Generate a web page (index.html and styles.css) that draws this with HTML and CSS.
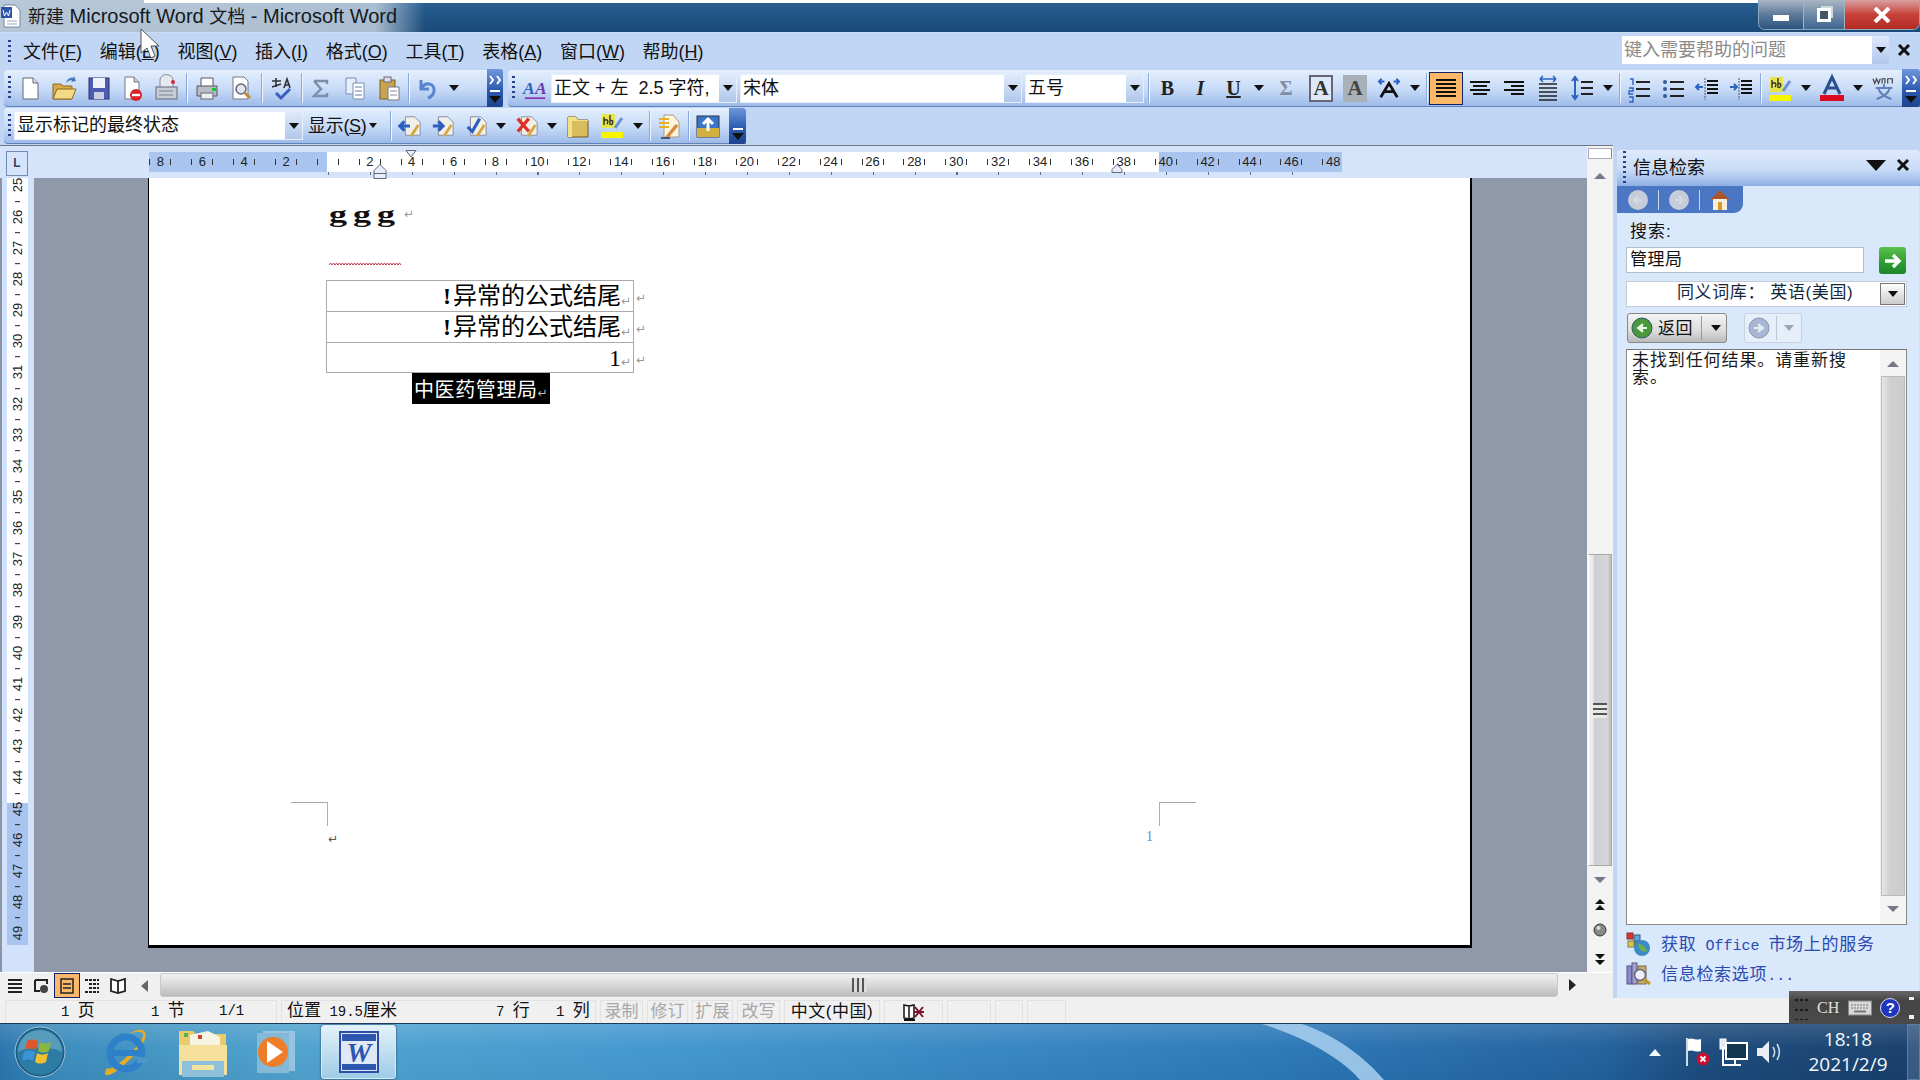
FILE: index.html
```html
<!DOCTYPE html>
<html lang="zh-CN">
<head>
<meta charset="utf-8">
<title>新建 Microsoft Word 文档 - Microsoft Word</title>
<link rel="stylesheet" href="styles.css">
</head>
<body>
<header class="title">
  <svg class="title-ic" viewBox="0 0 20 24"><path d="M3 1h11l5 5v17H3z" fill="#fff" stroke="#7a8aa0"/><rect x="0" y="3" width="11" height="11" fill="#2b56a8"/><path d="M2 6l1.5 6 2-4 2 4L9 6" fill="none" stroke="#fff"/><path d="M6 17h10M6 20h10" stroke="#9ab"/></svg>
  <span class="title-text"><span class="cj">新建</span> Microsoft Word <span class="cj">文档</span> - Microsoft Word</span>
  <div class="winbtns">
    <span class="wb wb-min"><i></i></span>
    <span class="wb wb-max"><i></i></span>
    <span class="wb wb-close"><svg width="18" height="16" viewBox="0 0 18 16"><path d="M2 1l14 14M16 1L2 15" stroke="#fff" stroke-width="4"/></svg></span>
  </div>
</header>

<nav class="menubar">
  <span class="grip"></span>
  <div class="menus">
    <span>文件(<u>F</u>)</span><span>编辑(<u>E</u>)</span><span>视图(<u>V</u>)</span><span>插入(<u>I</u>)</span><span>格式(<u>O</u>)</span><span>工具(<u>T</u>)</span><span>表格(<u>A</u>)</span><span>窗口(<u>W</u>)</span><span>帮助(<u>H</u>)</span>
  </div>
  <div class="helpbox"><span class="help-field">键入需要帮助的问题</span><span class="arrowbtn"><i class="tri"></i></span></div>
  <svg class="help-x" width="14" height="14" viewBox="0 0 14 14"><path d="M2 2l10 10M12 2L2 12" stroke="#111" stroke-width="3"/></svg>
</nav>

<section class="tbrow">
  <div class="tbgroup g1">
    <span class="grip"></span>
    <span class="btn"><svg class="ic" viewBox="0 0 24 28"><path d="M5 4h10l5 5v16H5z" fill="#fff" stroke="#667"/><path d="M15 4v5h5" fill="#dde" stroke="#667"/></svg></span>
    <span class="btn"><svg class="ic" viewBox="0 0 24 28"><path d="M1 10h8l2 2h9v13H1z" fill="#d9a94a" stroke="#8a6a20"/><path d="M1 25l4-10h19l-4 10z" fill="#f6d985" stroke="#8a6a20"/><path d="M14 9c1-4 4-6 7-5l1-2 2 5-5 1 1-2c-2 0-4 1-6 3z" fill="#4a78c0"/></svg></span>
    <span class="btn"><svg class="ic" viewBox="0 0 24 28"><rect x="3" y="4" width="20" height="21" fill="#4f5cb4" stroke="#2a3070"/><rect x="7" y="4" width="12" height="10" fill="#eef2fa"/><rect x="8" y="18" width="10" height="7" fill="#c8cede"/></svg></span>
    <span class="btn"><svg class="ic" viewBox="0 0 24 28"><path d="M5 3h9l5 5v17H5z" fill="#fff" stroke="#778"/><path d="M14 3v5h5" fill="#ccd" stroke="#778"/><circle cx="16" cy="21" r="6" fill="#d8232a"/><path d="M12 21h8" stroke="#fff" stroke-width="2.4"/></svg></span>
    <span class="btn"><svg class="ic" viewBox="0 0 24 28"><path d="M6 13V6a6 5 0 0 1 13 0v7" fill="#e6e9f0" stroke="#889"/><rect x="2" y="13" width="21" height="12" fill="#c8ccd6" stroke="#667"/><path d="M5 17h14M5 21h14" stroke="#7a8090"/><circle cx="19" cy="8" r="2" fill="#d23"/></svg></span>
    <span class="sep wide"></span>
    <span class="btn"><svg class="ic" viewBox="0 0 24 28"><path d="M6 12V4h12v8" fill="#fff" stroke="#556"/><path d="M2 12h20v10H2z" fill="#b8bcc8" stroke="#556"/><rect x="6" y="19" width="12" height="6" fill="#eee" stroke="#667"/><rect x="17" y="14" width="4" height="3" fill="#1c2"/></svg></span>
    <span class="btn"><svg class="ic" viewBox="0 0 24 28"><path d="M4 3h11l4 4v18H4z" fill="#fff" stroke="#778"/><circle cx="12" cy="15" r="5" fill="#dfe6f0" stroke="#667" stroke-width="1.5"/><path d="M16 19l5 5" stroke="#c98a2b" stroke-width="3"/></svg></span>
    <span class="sep wide"></span>
    <span class="btn"><svg class="ic" viewBox="0 0 24 28"><path d="M2 7h9M6 4v9M2 13l9-3M14 14l3-9 3 9M15 11h5" fill="none" stroke="#333" stroke-width="1.6"/><path d="M6 19l5 5L20 15" fill="none" stroke="#3a5fc0" stroke-width="3"/></svg></span>
    <span class="sep"></span>
    <span class="btn"><svg class="ic" viewBox="0 0 24 28"><path d="M5 7h13v3M18 22H5l7-7-7-8M5 22h13v-3" fill="none" stroke="#7c8da8" stroke-width="2.4"/></svg></span>
    <span class="btn"><svg class="ic" viewBox="0 0 24 28"><path d="M3 4h10v16H3z" fill="#e8eefa" stroke="#7c8db0"/><path d="M10 9h11v16H10z" fill="#fff" stroke="#7c8db0"/><path d="M12 13h7M12 17h7M12 21h7" stroke="#5f7fb5"/></svg></span>
    <span class="btn"><svg class="ic" viewBox="0 0 24 28"><rect x="3" y="6" width="15" height="19" fill="#c8a450" stroke="#7a6020"/><rect x="7" y="3" width="7" height="5" fill="#dde" stroke="#667"/><path d="M11 13h11v13H11z" fill="#fff" stroke="#778"/><path d="M13 17h7M13 21h7" stroke="#889"/></svg></span>
    <span class="sep"></span>
    <span class="btn"><svg class="ic" viewBox="0 0 24 28"><path d="M5 6v9h8" fill="none" stroke="#5a84d0" stroke-width="3"/><path d="M5 15c4-8 14-6 13 2-.4 3-3 6-6 7" fill="none" stroke="#5a84d0" stroke-width="3"/></svg></span>
    <span class="drop"><i class="tri"></i></span>
    <span class="overflow ov-end"><svg width="16" height="38" viewBox="0 0 16 38"><path d="M3 7l3 4-3 4M10 7l3 4-3 4" fill="none" stroke="#fff" stroke-width="2"/><path d="M3 22h10" stroke="#fff" stroke-width="2"/><path d="M2 27h12l-6 7z" fill="#111"/></svg></span>
  </div>
  <div class="tbgroup g2">
    <span class="grip"></span>
    <span class="btn aa"><svg class="ic" viewBox="0 0 26 28"><text x="0" y="21" class="aa1">A</text><text x="13" y="21" class="aa2">A</text><path d="M2 25h22" stroke="#8a3fb0" stroke-width="2"/></svg></span>
    <div class="combo c-style"><span class="field">正文 + 左&nbsp; 2.5 字符,</span><span class="arrowbtn"><i class="tri"></i></span></div>
    <div class="combo c-font"><span class="field">宋体</span><span class="arrowbtn"><i class="tri"></i></span></div>
    <div class="combo c-size"><span class="field">五号</span><span class="arrowbtn"><i class="tri"></i></span></div>
    <span class="sep"></span>
    <span class="btn n fmt b">B</span>
    <span class="btn n fmt it">I</span>
    <span class="btn n fmt un">U</span>
    <span class="drop"><i class="tri"></i></span>
    <span class="btn fmt sig">Σ</span>
    <span class="btn"><span class="boxa">A</span></span>
    <span class="btn"><span class="graya">A</span></span>
    <span class="btn"><svg class="ic" viewBox="0 0 26 28"><path d="M4 24L13 9l9 15M8 18h10" fill="none" stroke="#111" stroke-width="3"/><path d="M2 7h6M5 4l-3 3 3 3M24 7h-6M21 4l3 3-3 3" fill="none" stroke="#2c62c0" stroke-width="2"/></svg></span>
    <span class="drop"><i class="tri"></i></span>
    <span class="sep"></span>
    <span class="btn on"><svg class="ic" viewBox="0 0 24 28"><path d="M2 6h20M2 10h20M2 14h20M2 18h20M2 22h20" stroke="#111" stroke-width="2"/></svg></span>
    <span class="btn"><svg class="ic" viewBox="0 0 24 28"><path d="M2 8h20M5 12h14M2 16h20M5 20h14" stroke="#111" stroke-width="2"/></svg></span>
    <span class="btn"><svg class="ic" viewBox="0 0 24 28"><path d="M2 8h20M9 12h13M2 16h20M9 20h13" stroke="#111" stroke-width="2"/></svg></span>
    <span class="btn"><svg class="ic" viewBox="0 0 24 28"><path d="M3 10h18M3 14h18M3 18h18M3 22h18M3 26h18" stroke="#222" stroke-width="1.6"/><path d="M4 5h16M4 5l3-3M4 5l3 3M20 5l-3-3M20 5l-3 3" fill="none" stroke="#2c62c0" stroke-width="1.6"/></svg></span>
    <span class="btn"><svg class="ic" viewBox="0 0 24 28"><path d="M11 8h12M11 14h12M11 20h12" stroke="#222" stroke-width="2"/><path d="M5 3v22M2 7l3-4 3 4M2 21l3 4 3-4" fill="none" stroke="#2c62c0" stroke-width="2"/></svg></span>
    <span class="drop"><i class="tri"></i></span>
    <span class="sep"></span>
    <span class="btn"><svg class="ic" viewBox="0 0 24 28"><path d="M9 8h14M9 15h14M9 22h14" stroke="#222" stroke-width="2"/><path d="M3 5h3v6M2 14h4v3H2v3h4M2 23h4v5H2" fill="none" stroke="#2c62c0" stroke-width="1.4"/></svg></span>
    <span class="btn"><svg class="ic" viewBox="0 0 24 28"><path d="M9 8h14M9 15h14M9 22h14" stroke="#222" stroke-width="2"/><circle cx="4" cy="8" r="2" fill="#345a9c"/><circle cx="4" cy="15" r="2" fill="#345a9c"/><circle cx="4" cy="22" r="2" fill="#345a9c"/></svg></span>
    <span class="btn"><svg class="ic" viewBox="0 0 24 28"><path d="M12 7h11M12 11h11M12 15h11M12 19h11" stroke="#111" stroke-width="2"/><path d="M10 4v22" stroke="#555" stroke-dasharray="2 1"/><path d="M8 13H1M4 10l-3 3 3 3" fill="none" stroke="#2c62c0" stroke-width="2"/></svg></span>
    <span class="btn"><svg class="ic" viewBox="0 0 24 28"><path d="M12 7h11M12 11h11M12 15h11M12 19h11" stroke="#111" stroke-width="2"/><path d="M10 4v22" stroke="#555" stroke-dasharray="2 1"/><path d="M1 13h7M5 10l3 3-3 3" fill="none" stroke="#2c62c0" stroke-width="2"/></svg></span>
    <span class="sep"></span>
    <span class="btn"><svg class="ic" viewBox="0 0 24 28"><rect x="2" y="3" width="13" height="15" fill="#e4e44c"/><path d="M4 14V6M4 10c3-3 5 0 3 3M10 4v10M10 10c3-2 4 2 1 4" fill="none" stroke="#333" stroke-width="1.4"/><path d="M15 17L22 7" stroke="#6b90d8" stroke-width="3"/><rect x="1" y="21" width="22" height="6" fill="#f5f500"/></svg></span>
    <span class="drop"><i class="tri"></i></span>
    <span class="btn"><svg class="ic" viewBox="0 0 24 28"><path d="M4 20L12 3l8 17M7 14h10" fill="none" stroke="#2c4f8c" stroke-width="3"/><rect x="0" y="21" width="24" height="6" fill="#dc0a20"/></svg></span>
    <span class="drop"><i class="tri"></i></span>
    <span class="btn"><svg class="ic" viewBox="0 0 26 28"><path d="M1 4l2 5 2-5 2 5 2-5M11 9V4h3v5M17 9V4h5v5" fill="none" stroke="#444" stroke-width="1.3"/><path d="M13 10v3M4 14h18M7 15c2 6 8 9 14 11M19 15c-2 6-8 9-14 11" fill="none" stroke="#5f80b8" stroke-width="2.2"/></svg></span>
    <span class="overflow"><svg width="16" height="38" viewBox="0 0 16 38"><path d="M3 7l3 4-3 4M10 7l3 4-3 4" fill="none" stroke="#fff" stroke-width="2"/><path d="M3 22h10" stroke="#fff" stroke-width="2"/><path d="M2 27h12l-6 7z" fill="#111"/></svg></span>
  </div>
</section>

<section class="tbrow row2">
  <div class="tbgroup g3">
    <span class="grip"></span>
    <div class="combo c-markup"><span class="field">显示标记的最终状态</span><span class="arrowbtn"><i class="tri"></i></span></div>
    <span class="showbtn">显示(<u>S</u>)<i class="tri"></i></span>
    <span class="sep"></span>
    <span class="btn n"><svg class="ic" viewBox="0 0 26 28"><path d="M8 4h10l6 6v14H8z" fill="#f0f0e8" stroke="#889"/><path d="M13 14H2M7 9l-5 5 5 5" fill="none" stroke="#2c5fc0" stroke-width="3.4"/><path d="M14 25l8-12" stroke="#d6a640" stroke-width="3"/></svg></span>
    <span class="btn n"><svg class="ic" viewBox="0 0 26 28"><path d="M8 4h10l6 6v14H8z" fill="#f0f0e8" stroke="#889"/><path d="M2 14h11M8 9l5 5-5 5" fill="none" stroke="#2c5fc0" stroke-width="3.4"/><path d="M14 25l8-12" stroke="#d6a640" stroke-width="3"/></svg></span>
    <span class="btn n"><svg class="ic" viewBox="0 0 26 28"><path d="M7 4h11l6 6v14H7z" fill="#f0f0e8" stroke="#889"/><path d="M4 15l5 5L17 6" fill="none" stroke="#2c5fc0" stroke-width="3.4"/><path d="M14 25l8-12" stroke="#d6a640" stroke-width="3"/></svg></span>
    <span class="drop"><i class="tri"></i></span>
    <span class="btn n"><svg class="ic" viewBox="0 0 26 28"><path d="M7 4h11l6 6v14H7z" fill="#f0f0e8" stroke="#889"/><path d="M3 6l12 14M15 6L3 20" stroke="#e03028" stroke-width="3.6"/><path d="M14 25l8-12" stroke="#d6a640" stroke-width="3"/></svg></span>
    <span class="drop"><i class="tri"></i></span>
    <span class="btn"><svg class="ic" viewBox="0 0 24 28"><path d="M2 5h8l2 3h10v17H2z" fill="#d9bd5c" stroke="#6f5c20"/><path d="M2 5v20h4V9h16V8H12l-2-3z" fill="#f2e08c"/></svg></span>
    <span class="btn"><svg class="ic" viewBox="0 0 24 28"><rect x="2" y="2" width="13" height="14" fill="#e4e44c"/><path d="M4 13V5M4 9c3-3 5 0 3 3M10 3v10M10 9c3-2 4 2 1 4" fill="none" stroke="#333" stroke-width="1.4"/><path d="M15 16L22 6" stroke="#6b90d8" stroke-width="3"/><rect x="1" y="20" width="22" height="6" fill="#f5f500"/></svg></span>
    <span class="drop"><i class="tri"></i></span>
    <span class="sep"></span>
    <span class="btn"><svg class="ic" viewBox="0 0 24 28"><path d="M7 3h9l6 7v15H7z" fill="#fbf5e0" stroke="#a98"/><path d="M2 7h10M2 11h10M2 15h10" stroke="#e8b020" stroke-width="2"/><path d="M10 25l10-12" stroke="#d88a3a" stroke-width="3.4"/><path d="M4 26h9" stroke="#345" stroke-width="1.6"/></svg></span>
    <span class="sep"></span>
    <span class="btn"><svg class="ic" viewBox="0 0 24 28"><rect x="1" y="4" width="22" height="21" fill="#3a76c8" stroke="#334"/><rect x="1" y="16" width="22" height="9" fill="#d2b040"/><path d="M12 7v12M7 12l5-5 5 5" fill="none" stroke="#fff" stroke-width="3"/></svg></span>
    <span class="overflow ov-end ov2"><svg width="16" height="36" viewBox="0 0 16 36"><path d="M3 21h10" stroke="#fff" stroke-width="2"/><path d="M2 25h12l-6 7z" fill="#111"/></svg></span>
  </div>
</section>

<main class="work">
  <div class="left">
    <div class="left-top">
      <div class="editor">
        <div class="hruler">
          <span class="tabbox">L</span>
          <div class="hr-strip">
            <div class="hr-cells">
              <span>8</span><span>6</span><span>4</span><span>2</span><span></span><span>2</span><span>4</span><span>6</span><span>8</span><span>10</span><span>12</span><span>14</span><span>16</span><span>18</span><span>20</span><span>22</span><span>24</span><span>26</span><span>28</span><span>30</span><span>32</span><span>34</span><span>36</span><span>38</span><span>40</span><span>42</span><span>44</span><span>46</span><span>48</span>
            </div>
            <div class="hr-bottom"></div>
          </div>
          <svg class="marker m-first" width="12" height="8" viewBox="0 0 12 8"><path d="M1 .5h10L6 7z" fill="#e8eefa" stroke="#667"/></svg>
          <svg class="marker m-left" width="14" height="15" viewBox="0 0 14 15"><path d="M7 .5l6 6v3H1v-3z M1 9.5h12v5H1z" fill="#e8eefa" stroke="#667"/></svg>
          <svg class="marker m-right" width="12" height="9" viewBox="0 0 12 9"><path d="M6 .5l5 5v3H1v-3z" fill="#e8eefa" stroke="#667"/></svg>
        </div>
        <div class="docarea">
          <div class="vruler"><div class="vr-strip"><div class="vr-cells">
            <span>25</span><span>26</span><span>27</span><span>28</span><span>29</span><span>30</span><span>31</span><span>32</span><span>33</span><span>34</span><span>35</span><span>36</span><span>37</span><span>38</span><span>39</span><span>40</span><span>41</span><span>42</span><span>43</span><span>44</span><span>45</span><span>46</span><span>47</span><span>48</span><span>49</span>
          </div></div></div>
          <div class="canvas">
            <article class="page">
              <div class="content">
                <p class="ggg"><span class="gs">ggg</span><i class="pm">↵</i></p>
                <svg class="squiggle" width="74" height="4" viewBox="0 0 74 4"><path d="M0 3l1.500-2 1.500 2 1.500-2 1.500 2 1.500-2 1.500 2 1.500-2 1.500 2 1.500-2 1.500 2 1.500-2 1.500 2 1.500-2 1.500 2 1.500-2 1.500 2 1.500-2 1.500 2 1.500-2 1.500 2 1.500-2 1.500 2 1.500-2 1.500 2 1.500-2 1.500 2 1.500-2 1.500 2 1.500-2 1.500 2 1.500-2 1.500 2 1.500-2 1.500 2 1.500-2 1.500 2 1.500-2 1.500 2 1.500-2 1.500 2 1.500-2 1.500 2 1.500-2 1.500 2 1.500-2 1.500 2 1.500-2 1.500 2" fill="none" stroke="#c8324a"/></svg>
                <div class="table">
                  <div class="tr"><div class="td"><b class="bang">!</b>异常的公式结尾<i class="pm">↵</i></div><i class="pm rowend">↵</i></div>
                  <div class="tr"><div class="td"><b class="bang">!</b>异常的公式结尾<i class="pm">↵</i></div><i class="pm rowend">↵</i></div>
                  <div class="tr last"><div class="td"><span class="one">1</span><i class="pm">↵</i></div><i class="pm rowend">↵</i></div>
                </div>
                <div class="selected">中医药管理局<i class="pm">↵</i></div>
              </div>
              <footer class="pagefoot">
                <div class="corner-l"><span class="crop"></span><i class="pm">↵</i></div>
                <div class="corner-r"><span class="pnum">1</span><span class="crop"></span></div>
              </footer>
            </article>
          </div>
        </div>
      </div>
      <aside class="vscroll">
        <span class="split"></span>
        <span class="sb-arrow up"></span>
        <span class="vtrack"></span>
        <span class="vthumb"><i class="grip-h"></i></span>
        <span class="sb-arrow down"></span>
        <svg class="pgnav" width="14" height="14" viewBox="0 0 14 14"><path d="M7 1l5 5H2zM2 12l5-5 5 5z" fill="#111"/></svg>
        <svg class="pgnav ball" width="14" height="14" viewBox="0 0 14 14"><circle cx="7" cy="7" r="6" fill="#888" stroke="#333"/><circle cx="5.500" cy="5" r="2" fill="#ddd"/></svg>
        <svg class="pgnav" width="14" height="14" viewBox="0 0 14 14"><path d="M2 2l5 5 5-5zM2 8h10l-5 5z" fill="#111"/></svg>
      </aside>
    </div>
    <div class="hscroll">
      <div class="views">
        <svg class="vw" width="18" height="18" viewBox="0 0 18 18"><path d="M2 3h14M2 7h14M2 11h14M2 15h14" stroke="#222" stroke-width="2"/></svg>
        <svg class="vw" width="18" height="18" viewBox="0 0 18 18"><path d="M3 3h12v4M3 3v11h5" fill="none" stroke="#222" stroke-width="2"/><circle cx="12" cy="12" r="4" fill="#444"/></svg>
        <span class="vw-on"><svg width="16" height="16" viewBox="0 0 16 16"><rect x="2" y="1" width="12" height="14" fill="none" stroke="#222" stroke-width="1.500"/><path d="M4 6h8M4 10h8" stroke="#222" stroke-width="1.500"/></svg></span>
        <svg class="vw" width="18" height="18" viewBox="0 0 18 18"><path d="M2 3h14M6 7h10M6 11h10M2 15h14" stroke="#222" stroke-width="2" stroke-dasharray="3 1"/></svg>
        <svg class="vw" width="18" height="18" viewBox="0 0 18 18"><path d="M2 2l7 2 7-2v12l-7 2-7-2zM9 4v12" fill="#fff" stroke="#222" stroke-width="1.800"/></svg>
        <span class="hl-arrow"></span>
      </div>
      <div class="htrack"><i class="grip-v"></i></div>
      <span class="hr-arrow"></span>
    </div>
  </div>

  <aside class="panel">
    <div class="panel-head">
      <span class="grip"></span>
      <h2>信息检索</h2>
      <i class="pn-tri"></i>
      <svg width="14" height="14" viewBox="0 0 14 14"><path d="M2 2l10 10M12 2L2 12" stroke="#111" stroke-width="3"/></svg>
    </div>
    <div class="panel-body">
      <div class="tabs">
        <svg width="24" height="24" viewBox="0 0 24 24"><circle cx="12" cy="12" r="10" fill="#c6ccd8"/><path d="M16 12H9m3-4l-4 4 4 4" fill="none" stroke="#d6dae4" stroke-width="2"/></svg>
        <i class="tabsep"></i>
        <svg width="24" height="24" viewBox="0 0 24 24"><circle cx="12" cy="12" r="10" fill="#c6ccd8"/><path d="M8 12h7m-3-4l4 4-4 4" fill="none" stroke="#d6dae4" stroke-width="2"/></svg>
        <i class="tabsep"></i>
        <svg width="24" height="24" viewBox="0 0 24 24"><path d="M2 12L12 2l10 10z" fill="#a8552c"/><rect x="5" y="11" width="14" height="11" fill="#f4efe0"/><rect x="10" y="14" width="4" height="8" fill="#dd9a22"/></svg>
      </div>
      <div class="pn-inner">
        <label class="lbl">搜索:</label>
        <div class="searchrow">
          <span class="input">管理局</span>
          <span class="go"><svg width="20" height="18" viewBox="0 0 20 18"><path d="M2 9h14M10 3l6 6-6 6" fill="none" stroke="#fff" stroke-width="3.400"/></svg></span>
        </div>
        <div class="lib"><span class="lib-t">同义词库： 英语(美国)</span><span class="libbtn"><i class="tri"></i></span></div>
        <div class="navrow">
          <span class="back"><svg width="22" height="22" viewBox="0 0 22 22"><circle cx="11" cy="11" r="10" fill="#4a9a3c" stroke="#356"/><path d="M16 11H9m3-4l-5 4 5 4" fill="#e8f4e4" stroke="#e8f4e4" stroke-width="2"/></svg><span class="back-t">返回</span><i class="navsep"></i><i class="tri"></i></span>
          <span class="forward"><svg width="22" height="22" viewBox="0 0 22 22"><circle cx="11" cy="11" r="10" fill="#a9b6d4" stroke="#8a96b0"/><path d="M6 11h7m-3-4l5 4-5 4" fill="#e6eaf4" stroke="#e6eaf4" stroke-width="2"/></svg><i class="navsep"></i><i class="tri gray"></i></span>
        </div>
        <div class="results">
          <p>未找到任何结果。请重新搜索。</p>
          <div class="rs-bar"><span class="sb-arrow up"></span><span class="rs-thumb"></span><span class="sb-arrow down"></span></div>
        </div>
        <a class="plink"><svg width="26" height="26" viewBox="0 0 26 26"><rect x="1" y="2" width="6" height="6" fill="#d33" stroke="#833"/><rect x="8" y="4" width="6" height="6" fill="#58a8e0" stroke="#357"/><rect x="2" y="10" width="6" height="6" fill="#dcc83c" stroke="#875"/><rect x="9" y="11" width="6" height="6" fill="#6a5" stroke="#353"/><circle cx="16" cy="17" r="8" fill="#3c8ac8"/><path d="M12 13c4 0 7 2 9 7-4 2-8 0-9-7z" fill="#6ab04c"/></svg><span class="pl-t">获取<span class="m">&nbsp;Office&nbsp;</span>市场上的服务</span></a>
        <a class="plink"><svg width="26" height="26" viewBox="0 0 26 26"><rect x="1" y="5" width="5" height="18" fill="#8a88c8" stroke="#557"/><rect x="6" y="2" width="5" height="21" fill="#a4a2d4" stroke="#557"/><rect x="12" y="5" width="8" height="18" fill="#c8b060" stroke="#765"/><circle cx="14" cy="14" r="5.500" fill="#eef" stroke="#667" stroke-width="1.500"/><path d="M18 18l6 5" stroke="#c09830" stroke-width="3"/></svg><span class="pl-t">信息检索选项<span class="m">...</span></span></a>
      </div>
    </div>
  </aside>
</main>

<footer class="status">
  <div class="cell a"><span><span class="m">1&nbsp;</span>页</span><span><span class="m">1&nbsp;</span>节</span><span class="m">1/1</span></div>
  <div class="cell b"><span>位置<span class="m">&nbsp;19.5</span>厘米</span><span><span class="m">7&nbsp;</span>行</span><span><span class="m">1&nbsp;</span>列</span></div>
  <div class="cell off">录制</div>
  <div class="cell off">修订</div>
  <div class="cell off">扩展</div>
  <div class="cell off">改写</div>
  <div class="cell lang">中文(中国)</div>
  <div class="cell"><svg width="22" height="20" viewBox="0 0 22 20"><path d="M1 3l5 1 5-1v13l-5 1-5-1zM6 4v13" fill="#fff" stroke="#111" stroke-width="1.500"/><path d="M1 18h11" stroke="#111" stroke-width="2"/><path d="M12 5l8 10M20 5l-8 10M11 10h10" stroke="#7c1430" stroke-width="2"/></svg></div>
  <div class="cell"></div>
  <div class="cell"></div>
  <div class="cell"></div>
</footer>

<div class="langbar">
  <i class="lb-dots"></i>
  <span class="lb-ch">CH</span>
  <svg width="24" height="16" viewBox="0 0 24 16"><rect x=".5" y="1" width="23" height="14" fill="#d8d8d8" stroke="#888"/><path d="M3 5h18M3 8h18" stroke="#777" stroke-dasharray="2 1"/><path d="M6 11.500h12" stroke="#777" stroke-width="2"/></svg>
  <span class="lb-help">?</span>
  <i class="lb-arrows"></i>
</div>

<div class="taskbar">
  <svg class="swoosh" width="1920" height="56" viewBox="0 0 1920 56"><path d="M1262 0C1310 15 1345 38 1360 56h24C1362 30 1332 10 1302 0z" fill="#a9d0f0" opacity=".85"/></svg>
  <svg class="orb" width="52" height="52" viewBox="0 0 52 52"><circle cx="26" cy="26" r="25" fill="#1b5c84" stroke="#9cc4d8"/><circle cx="26" cy="26" r="23" fill="#2c7ca4"/><path d="M4 26a22 22 0 0 1 44 0c-10-6-34-6-44 0z" fill="#7eb4d0" opacity=".55"/><path d="M13 15c4-2 7-2 11 0l-2 9c-4-2-7-2-11 0z" fill="#e0562c"/><path d="M26 16c4 2 7 2 11 0l-2 9c-4 2-7 2-11 0z" fill="#8ab83c"/><path d="M10 26c4-2 7-2 11 0l-2 9c-4-2-7-2-11 0z" fill="#3c94d8"/><path d="M23 27c4 2 7 2 11 0l-2 9c-4 2-7 2-11 0z" fill="#f0c030"/></svg>
  <svg class="tk ie" width="48" height="52" viewBox="0 0 48 52"><path d="M6 42C0 52 8 52 22 40S48 12 44 6c-3-4-10-2-16 2 8-3 13-3 14 0 1 5-10 18-20 26S8 44 6 42z" fill="#e6ab24"/><circle cx="25" cy="27" r="16" fill="none" stroke="#2e80c8" stroke-width="7"/><path d="M11 27h29" stroke="#2e80c8" stroke-width="6"/><path d="M36 31h10v6H36z" fill="#4a96c4"/></svg>
  <svg class="tk folder" width="50" height="50" viewBox="0 0 50 50"><path d="M1 4h14l3 3h30v36H1z" fill="#e8cc6c"/><path d="M12 8l18-4 12 6v10H12z" fill="#f8f4e4"/><rect x="6" y="6" width="4" height="4" fill="#5ab04c"/><rect x="20" y="8" width="4" height="4" fill="#d04030"/><path d="M1 18h48v30H1z" fill="#f4e09a"/><path d="M4 34h42v16H4z" fill="#8ec0dc"/><path d="M14 38h22v5H14z" fill="#f0e4a0"/></svg>
  <svg class="tk media" width="42" height="46" viewBox="0 0 42 46"><rect x="8" y="2" width="32" height="40" fill="#a8cce4" opacity=".8"/><rect x="2" y="4" width="32" height="40" fill="#86b8d8"/><circle cx="18" cy="23" r="15" fill="#ee7c28"/><path d="M12 12l16 11-16 11z" fill="#fff"/></svg>
  <div class="wordbtn"><svg width="40" height="42" viewBox="0 0 40 42"><rect x="1" y="1" width="38" height="40" fill="#dfe8f5" stroke="#2c4ea8" stroke-width="2"/><rect x="3" y="3" width="34" height="7" fill="#2c56b0"/><rect x="3" y="33" width="34" height="6" fill="#2c56b0"/><text x="20" y="31" class="w-text">W</text></svg></div>
  <div class="tray">
    <span class="t-up"></span>
    <svg class="t-ic" width="30" height="30" viewBox="0 0 30 30"><path d="M4 1v28" stroke="#fff" stroke-width="1.600"/><path d="M5 2c5-2 7 2 13 0v12c-6 2-8-2-13 0z" fill="#fff"/><circle cx="20" cy="22" r="6.500" fill="#c8102e"/><path d="M17.500 19.500l5 5m0-5l-5 5" stroke="#fff" stroke-width="1.800"/></svg>
    <svg class="t-ic" width="30" height="30" viewBox="0 0 30 30"><rect x="1" y="2" width="6" height="10" fill="#dfe8f0" stroke="#fff"/><rect x="7" y="6" width="21" height="16" fill="#12354f" stroke="#fff" stroke-width="2"/><path d="M4 10v18h18M16 22v6" fill="none" stroke="#fff" stroke-width="2"/></svg>
    <svg class="t-ic" width="30" height="30" viewBox="0 0 30 30"><path d="M2 11h5l7-7v22l-7-7H2z" fill="#e8eef4"/><path d="M18 10c2 3 2 7 0 10M22 7c3 5 3 11 0 16" fill="none" stroke="#cfe0ee" stroke-width="1.500"/></svg>
    <div class="clock"><span>18:18</span><span>2021/2/9</span></div>
    <span class="showdesk"></span>
  </div>
</div>

<svg class="cursor" width="22" height="34" viewBox="0 0 22 34"><path d="M1 1v24l6-5 4 10 4-2-4-10h8z" fill="#fff" stroke="#555"/></svg>
</body>
</html>
```

FILE: styles.css
```css
* { box-sizing: border-box; }
html, body { margin: 0; height: 100%; }
body {
  width: 1920px; height: 1080px; overflow: hidden;
  display: flex; flex-direction: column; position: relative;
  font-family: "Liberation Sans", "Noto Sans CJK SC", sans-serif;
  font-size: 18px; color: #111; background: #c1d6f5;
}
i { font-style: normal; }
u { text-decoration: underline; }
.m { font-family: "Liberation Mono", monospace; font-size: 14px; }

/* Title bar */
.title {
  height: 33px; flex: none; display: flex; align-items: center; position: relative;
  background:
    linear-gradient(90deg, rgba(200,212,225,.9) 0, rgba(195,208,222,.85) 375px, rgba(190,205,220,0) 425px),
    linear-gradient(#2b6093, #1f5384 55%, #1c4a78);
  border-bottom: 1px solid #c9dcf2;
}
.title::before { content: ""; position: absolute; left: 144px; width: 1632px; top: 0; height: 3px; background: #fff; }
.title-ic { width: 20px; height: 24px; margin-left: 1px; }
.title-text { margin: -2px 0 0 7px; font-size: 20px; color: #141a20; white-space: nowrap; }
.cj { font-size: 18px; }
.winbtns {
  margin-left: auto; align-self: flex-start; display: flex; height: 30px; width: 162px;
  border: 1px solid #8ea6be; border-top: 0; border-radius: 0 0 7px 7px; overflow: hidden; position: relative;
}
.wb { display: flex; align-items: center; justify-content: center; border-right: 1px solid #9fb2c6; background: linear-gradient(#a9b6c4, #5d7a99 50%, #2b5480); }
.wb-min { width: 45px; }
.wb-min i { width: 16px; height: 6px; margin-top: 6px; background: #fff; }
.wb-max { width: 41px; background: linear-gradient(#a9b6c4, #6f8aa6 50%, #3f6690); }
.wb-max i { width: 14px; height: 14px; background: #456; border: 3px solid #fff; box-shadow: 3px -3px 0 -1px #cdd; }
.wb-close { flex: 1; border: 0; background: linear-gradient(#d9a0a0, #c8423a 50%, #b42a24); }

/* Menu */
.menubar { height: 37px; flex: none; display: flex; align-items: center; padding-left: 8px; background: #c1d6f5; }
.grip {
  flex: none; width: 3px; height: 24px;
  background: repeating-linear-gradient(#27408b 0 2px, transparent 2px 5px);
}
.menus { display: flex; gap: 17.700px; margin: -3px 0 0 12px; white-space: nowrap; }
.helpbox { margin: -3px 8px 0 auto; display: flex; width: 267px; height: 28px; background: #fff; }
.help-field { flex: 1; padding-left: 2px; color: #8a8a8a; line-height: 28px; }
.help-x { margin: -3px 9px 0 0; }
.arrowbtn { flex: none; width: 17px; display: flex; align-items: center; justify-content: center; background: linear-gradient(#dfe9fa, #b0c8ec); }
.tri { display: inline-block; width: 0; height: 0; border-left: 5px solid transparent; border-right: 5px solid transparent; border-top: 6px solid #111; }
.tri.gray { border-top-color: #9aa; }

/* Toolbars */
.tbrow { height: 38px; flex: none; display: flex; background: #c1d6f5; padding-left: 4px; }
.row2 { height: 37px; }
.tbgroup {
  display: flex; align-items: center; height: 37px; border-radius: 4px 0 0 4px;
  background: linear-gradient(#e4effd, #c6daf7 55%, #9dbbe9);
  border-bottom: 1px solid #5f82b8;
}
.tbgroup > .grip { margin: 0 3px 0 4px; }
.g1 { width: 499px; padding-right: 0; }
.g2 { width: 1412px; margin-left: 5px; }
.g3 { width: 742px; height: 36px; }
.g1 > .grip { margin-right: 2px; }
.g2 > .grip { margin-right: 4px; }
.g3 > .grip { margin-right: 3px; }
.btn { flex: none; width: 34px; height: 33px; display: flex; align-items: center; justify-content: center; }
.btn.n { width: 33px; }
.btn.aa { width: 32px; }
.btn.on { background: #fbb868; border: 1px solid #10246e; }
.ic { width: 24px; height: 28px; display: block; overflow: visible; }
.drop { flex: none; width: 18px; height: 33px; display: flex; align-items: center; justify-content: center; }
.sep { flex: none; width: 1px; height: 30px; margin: 0 2px; background: #8aa8d8; box-shadow: 1px 0 0 #f0f6ff; }
.sep.wide { margin: 0 3px; }
.overflow {
  flex: none; margin-left: auto; width: 18px; height: 38px; display: flex; align-items: center; justify-content: center;
  background: linear-gradient(#6f96dc, #2c5cb0 55%, #1d438e); border-radius: 0 3px 3px 0;
}
.ov-end { width: 16px; }
.ov2 { margin-left: 4px; width: 17px; height: 36px; }
.aa1 { font: italic bold 19px "Liberation Serif", serif; fill: #2c62c0; }
.aa2 { font: italic bold 19px "Liberation Serif", serif; fill: #6a3fb0; }
.combo { flex: none; display: flex; height: 29px; margin-right: 3px; background: #fff; border: 1px solid #e8effb; }
.field { flex: 1; padding-left: 2px; line-height: 26px; white-space: nowrap; overflow: hidden; }
.c-style { width: 186px; }
.c-font { width: 282px; }
.c-size { width: 119px; margin-right: 2px; }
.c-markup { width: 289px; margin-right: 3px; }
.fmt { font-family: "Liberation Serif", serif; font-weight: 700; font-size: 20px; color: #222; }
.it { font-style: italic; }
.un { text-decoration: underline; }
.btn.sig { color: #7f8ca6; font-size: 20px; width: 36px; }
.boxa { width: 24px; height: 27px; border: 2px solid #667; background: #dfe8f6; font: 700 21px/23px "Liberation Serif", serif; text-align: center; color: #333; }
.graya { width: 24px; height: 27px; background: #a9b0b8; font: 700 21px/27px "Liberation Serif", serif; text-align: center; color: #444; }
.showbtn { flex: none; width: 80px; display: flex; align-items: center; padding-left: 2px; white-space: nowrap; letter-spacing: -.3px; margin-right: 2px; line-height: 24px; }
.showbtn .tri { margin-left: 2px; border-left-width: 4px; border-right-width: 4px; border-top-width: 5px; }

/* Work area */
.work { height: 853px; flex: none; display: flex; }
.left { width: 1613px; display: flex; flex-direction: column; border-top: 1px solid #6e7784; }
.left-top { height: 826px; flex: none; display: flex; }
.editor { width: 1587px; display: flex; flex-direction: column; }
.hruler { height: 32px; position: relative; background: #d6e4fb; display: flex; align-items: flex-start; padding-top: 5px; flex: none; }
.tabbox { width: 22px; height: 25px; margin: 0 0 0 6px; border: 1px solid #6f8bb2; font: 700 12px/23px "Liberation Sans", sans-serif; text-align: center; color: #345; }
.hr-strip { width: 1193px; margin-left: 121px; overflow: hidden; }
.hr-cells {
  display: flex; height: 20px; margin-top: 1px; width: 1193px;
  background: linear-gradient(90deg, #a9c4ef 0 178px, #fff 178px 1010px, #a9c4ef 1010px);
  overflow: hidden;
}
.hr-cells span {
  flex: none; width: 41.900px; height: 20px; font-size: 13px; line-height: 19px; text-align: center; color: #222; position: relative; left: -9.600px;
  background:
    linear-gradient(#333, #333) no-repeat 10px center / 1px 6px,
    linear-gradient(#333, #333) no-repeat 31px center / 1px 6px;
}
.hr-bottom {
  height: 5px;
  background: repeating-linear-gradient(90deg, #5f6f88 0 1px, transparent 1px 41.900px) 178.500px 0 / 1000px 3px no-repeat;
}
.marker { position: absolute; }
.m-first { left: 405px; top: 4px; }
.m-left { left: 373px; top: 18px; }
.m-right { left: 1111px; top: 18px; }
.docarea { flex: 1; display: flex; min-height: 0; }
.vruler { width: 34px; flex: none; background: #d3e2fb; border-left: 2px solid #8a94a4; padding-left: 5px; }
.vr-strip { width: 21px; height: 794px; overflow: hidden; background: linear-gradient(#fff 0 625px, #a9c4ef 625px 767px, transparent 767px); }
.vr-cells { display: flex; flex-direction: column; margin-top: -8.600px; }
.vr-cells span {
  flex: none; height: 31.170px; display: flex; align-items: center; justify-content: center;
  font-size: 13px; color: #222; writing-mode: vertical-rl;
  background: linear-gradient(#222, #222) no-repeat center bottom / 5px 1px;
  transform: rotate(180deg);
}
.canvas { flex: 1; background: #8f99aa; padding: 0 115px 24px 114px; display: flex; }
.page {
  width: 1324px; flex: none; background: #fff; display: flex; flex-direction: column;
  border-left: 1px solid #000; border-right: 2px solid #000; border-bottom: 3px solid #000;
}
.content { padding-left: 179px; }
.pm { font: 12px "DejaVu Sans", sans-serif; color: #999; }
.ggg { margin: 19px 0 0 1px; height: 34px; font: 700 24px/34px "Liberation Serif", serif; display: flex; align-items: center; color: #111; }
.gs { display: inline-block; letter-spacing: 4px; transform: scaleX(1.500); transform-origin: left center; }
.ggg .pm { margin-left: 27px; }
.squiggle { display: block; margin: 31px 0 0 1px; }
.table { margin: 14px 0 0 -2px; width: 320px; }
.tr { display: flex; align-items: center; height: 31px; }
.tr.last { height: 31px; }
.td {
  flex: none; width: 308px; height: 100%; border: 1px solid #aaa; border-bottom: 0;
  display: flex; justify-content: flex-end; align-items: center; padding-right: 1px;
  font-size: 24px; line-height: 30px; color: #000; white-space: nowrap;
}
.tr.last .td { border-bottom: 1px solid #aaa; }
.td .pm { align-self: flex-end; margin-bottom: 3px; width: 11px; }
.rowend { margin-left: 2px; margin-top: 4px; }
.bang { font-family: "Liberation Serif", serif; margin-right: 2px; }
.one { font-family: "Liberation Serif", serif; font-size: 24px; }
.selected {
  width: 138px; height: 31px; margin: 0 0 0 84px; background: #000; color: #fff;
  font-size: 20px; letter-spacing: .6px; line-height: 34px; white-space: nowrap; padding-left: 2px;
}
.selected .pm { color: #bbb; letter-spacing: 0; }
.pagefoot { margin-top: auto; height: 143px; display: flex; justify-content: space-between; padding: 0 274px 0 142px; }
.corner-l, .corner-r { display: flex; flex-direction: column; }
.crop { display: block; width: 37px; height: 24px; border-top: 1px solid #a8a8a8; }
.corner-l .crop { border-right: 1px solid #b0b0b0; }
.corner-r { flex-direction: row; align-items: flex-start; }
.corner-r .crop { border-left: 1px solid #b0b0b0; }
.corner-l .pm { margin: 6px 0 0 37px; color: #555; }
.pnum { font: 14px "Liberation Serif", serif; color: #5a90c8; margin: 27px 6px 0 0; }

/* Vertical scrollbar */
.vscroll { width: 26px; position: relative; background: #f3f3f3; display: flex; flex-direction: column; align-items: center; }
.split { width: 24px; height: 11px; margin-top: 2px; background: #fff; border: 1px solid #aab; border-right-color: #889; }
.sb-arrow { width: 0; height: 0; border-left: 6px solid transparent; border-right: 6px solid transparent; }
.sb-arrow.up { border-bottom: 6px solid #778; }
.sb-arrow.down { border-top: 6px solid #778; }
.vscroll > .sb-arrow.up { margin-top: 14px; }
.vtrack { height: 375px; }
.vthumb {
  width: 24px; height: 312px; margin-left: -1px; flex: none;
  background: linear-gradient(90deg, #eee 0, #eaeaea 18%, #cfcfd2 25%, #d6d6d8 85%, #b8b8b8);
  border: 1px solid #aaa; border-left-color: #fff;
  display: flex; align-items: center; justify-content: center;
}
.grip-h { width: 14px; height: 15px; background: repeating-linear-gradient(#555 0 2px, #e8e8e8 2px 5px); }
.vscroll > .sb-arrow.down { margin-top: 11px; }
.pgnav { margin-top: 15px; flex: none; }
.pgnav.ball { margin-top: 11px; }

/* Horizontal scrollbar */
.hscroll { height: 26px; flex: none; display: flex; align-items: flex-start; background: #f0f0f0; border-top: 1px solid #fff; }
.views { width: 160px; height: 25px; flex: none; display: flex; align-items: center; padding-left: 6px; }
.vw { margin-right: 8px; flex: none; }
.views .vw:nth-child(2) { margin-right: 4px; }
.views .vw:nth-child(4) { margin: 0 8px 0 0; }
.views .vw:nth-child(5) { margin-right: 8px; }
.vw-on { width: 26px; height: 25px; flex: none; background: #fbb868; border: 1px solid #10246e; display: flex; align-items: center; justify-content: center; margin-right: 3px; }
.hl-arrow { width: 0; height: 0; border-top: 6px solid transparent; border-bottom: 6px solid transparent; border-right: 7px solid #666; margin-left: 6px; }
.htrack {
  width: 1398px; height: 24px; flex: none; background: linear-gradient(#f0f0f0, #e6e6e6 25%, #cfcfd0 65%, #bdbdbd);
  border-radius: 3px; border: 1px solid #c8c8c8; display: flex; align-items: center; justify-content: center;
}
.grip-v { width: 15px; height: 14px; background: repeating-linear-gradient(90deg, #555 0 2px, #ddd 2px 5px); }
.hr-arrow { width: 0; height: 0; margin: 6px 0 0 11px; border-top: 6px solid transparent; border-bottom: 6px solid transparent; border-left: 7px solid #222; }

/* Task panel */
.panel { width: 307px; flex: none; display: flex; flex-direction: column; background: #c1d6f5; padding: 5px 0 0 0; }
.panel-head {
  height: 36px; flex: none; display: flex; align-items: center; margin-left: 4px; padding-left: 6px;
  background: linear-gradient(#dfeafb, #c8dbf7 55%, #8fb0e4); border-radius: 4px 4px 0 0;
}
.panel-head .grip { height: 34px; }
.panel-head h2 { margin: -4px 0 0 7px; font-size: 18px; font-weight: 400; }
.pn-tri { margin: -6px 10px 0 auto; width: 0; height: 0; border-left: 10px solid transparent; border-right: 10px solid transparent; border-top: 11px solid #111; }
.panel-head svg { margin: -6px 10px 0 0; }
.panel-body { flex: 1; margin-left: 4px; background: #dae8fc; display: flex; flex-direction: column; border-right: 1px solid #cfe0f8; }
.tabs {
  width: 126px; height: 27px; flex: none; background: #4a76c4; border-radius: 0 0 9px 0;
  display: flex; align-items: center; padding-left: 9px; gap: 8px;
}
.tabsep { width: 1px; height: 20px; background: #c8d6ee; }
.pn-inner { padding: 0 12px 0 9px; display: flex; flex-direction: column; flex: 1; }
.lbl { height: 34px; line-height: 37px; padding-left: 4px; font-size: 17px; letter-spacing: 1px; }
.searchrow { display: flex; align-items: flex-start; height: 34px; }
.input { width: 238px; height: 26px; background: #fff; border: 1px solid #b4bfcc; padding-left: 3px; font-size: 17px; line-height: 24px; letter-spacing: .5px; }
.go {
  width: 27px; height: 27px; margin-left: 15px; border-radius: 3px; display: flex; align-items: center; justify-content: center;
  background: linear-gradient(#5ac24e, #2c9c30 60%, #1d8428);
}
.lib { height: 26px; flex: none; background: #fff; border: 1px solid #c2ccd8; display: flex; align-items: center; position: relative; padding-left: 50px; font-size: 17px; letter-spacing: .6px; white-space: nowrap; color: #14283c; }
.lib-t { flex: 1; line-height: 20px; margin-top: -3px; }
.libbtn { width: 25px; height: 22px; margin-right: 1px; border: 1px solid #777; background: linear-gradient(#fff, #ccc); display: flex; align-items: center; justify-content: center; }
.navrow { display: flex; gap: 17px; margin: 6px 0 6px 1px; height: 30px; flex: none; }
.back, .forward { display: flex; align-items: center; border-radius: 3px; }
.back { width: 100px; border: 1px solid #888; background: linear-gradient(#f4f4f4, #dcdcdc 60%, #bbb); padding-left: 3px; }
.back-t { margin: -3px 0 0 5px; font-size: 17px; letter-spacing: .5px; }
.navsep { width: 1px; height: 24px; background: #999; margin: 0 9px 0 8px; }
.forward { width: 58px; border: 1px solid #c8d2e0; background: #e6eef9; padding-left: 3px; }
.forward .navsep { background: #bcc6d4; margin: 0 7px 0 6px; }
.results { height: 576px; flex: none; background: #fff; border: 1px solid #888; border-top-color: #777; display: flex; }
.results p { flex: 1; margin: 0; padding: 2px 14px 0 5px; font-size: 17px; line-height: 17px; letter-spacing: .9px; color: #1a1a1a; }
.rs-bar { width: 26px; flex: none; background: #f4f4f4; display: flex; flex-direction: column; align-items: center; }
.rs-bar .sb-arrow.up { margin-top: 11px; }
.rs-thumb { width: 24px; height: 520px; margin-top: 9px; background: linear-gradient(90deg, #e8e8e8, #d0d0d2 35%, #ccc); border: 1px solid #bbb; }
.rs-bar .sb-arrow.down { margin-top: 10px; }
.plink { display: flex; align-items: center; gap: 9px; height: 30px; color: #2b4bb0; font-size: 17px; letter-spacing: .7px; white-space: nowrap; }
.plink:first-of-type { margin-top: 4px; }
.pl-t { margin-top: -3px; }
.plink .m { letter-spacing: 0; font-size: 15px; }

/* Status bar */
.status {
  height: 26px; flex: none; background: #f0f0f0; padding: 2px 0 0 5px;
  display: grid; grid-template-columns: 272px 315px 43px 41px 41px 43px 96px 59px 44px 28px 39px; column-gap: 4px; justify-content: start;
  font-size: 17px; line-height: 19px; border-bottom: 1px solid #1c3a5a;
}
.cell { height: 23px; border: 1px solid #e2e2e2; border-bottom: 0; text-align: center; white-space: nowrap; display: flex; align-items: center; justify-content: center; padding-bottom: 1px; }
.cell.off { color: #a8a8a8; }
.cell.lang { letter-spacing: .5px; }
.cell.a, .cell.b { display: grid; justify-content: start; align-items: center; text-align: left; }
.cell.a { grid-template-columns: 90px 68px auto; padding-left: 55px; }
.cell.b { grid-template-columns: 209px 60px auto; padding-left: 5px; }

.langbar {
  position: absolute; left: 1789px; top: 991px; width: 131px; height: 33px;
  background: linear-gradient(#666, #454545 30%, #4a4a4a); display: flex; align-items: center; color: #e0e0e0;
}
.lb-dots { width: 15px; height: 25px; margin-left: 5px; background: radial-gradient(circle, #1c1c1c 1.200px, transparent 1.600px) 0 0 / 5px 10px; }
.lb-ch { margin: 0 9px 0 8px; font: 16px "Liberation Serif", serif; }
.lb-help {
  width: 20px; height: 20px; margin-left: 8px; border-radius: 50%; background: #2036c0; border: 1px solid #dde;
  font: 700 15px/18px "Liberation Sans", sans-serif; color: #fff; text-align: center;
}
.lb-arrows { width: 5px; height: 22px; margin-left: 9px; background: linear-gradient(#eee 0 3px, transparent 3px 18px, #eee 18px); }

/* Taskbar */
.taskbar {
  flex: 1; position: relative; display: flex; align-items: center;
  background:
    linear-gradient(rgba(255,255,255,.14), rgba(255,255,255,.02) 40%, rgba(0,0,0,.03)),
    linear-gradient(90deg, #2a74ae 0, #3a8cbd 60px, #4fa3ce 300px, #4398d0 640px, #2b78b8 1280px, #22619e 1600px, #1b4b7d 1700px, #183f6c 100%);
  overflow: hidden;
}
.swoosh { position: absolute; left: 0; top: 0; }
.orb { margin-left: 14px; position: relative; flex: none; }
.tk { position: relative; flex: none; }
.ie { margin-left: 35px; }
.folder { margin-left: 29px; }
.media { margin-left: 27px; }
.wordbtn {
  width: 75px; height: 54px; margin-left: 24px; position: relative; flex: none; border: 1px solid #d8ecf8; border-radius: 3px;
  background: linear-gradient(#e4f2fa, #9fcbe6); display: flex; align-items: center; justify-content: center; box-shadow: 0 0 2px #123;
}
.w-text { font: italic 700 28px "Liberation Serif", serif; fill: #2c56b0; text-anchor: middle; }
.tray { margin-left: auto; position: relative; display: flex; align-items: center; height: 100%; }
.t-up { width: 0; height: 0; border-left: 6px solid transparent; border-right: 6px solid transparent; border-bottom: 7px solid #f4f8fc; margin-right: 22px; }
.t-ic { margin-right: 6px; flex: none; }
.clock { width: 118px; display: flex; flex-direction: column; align-items: center; color: #f4f8fc; font-family: "Open Sans", sans-serif; font-size: 19px; line-height: 25px; margin-left: -2px; }
.showdesk { width: 13px; height: 100%; border: 1px solid #5a7fa4; background: rgba(255,255,255,.14); }

.cursor { position: absolute; left: 140px; top: 28px; }
```
